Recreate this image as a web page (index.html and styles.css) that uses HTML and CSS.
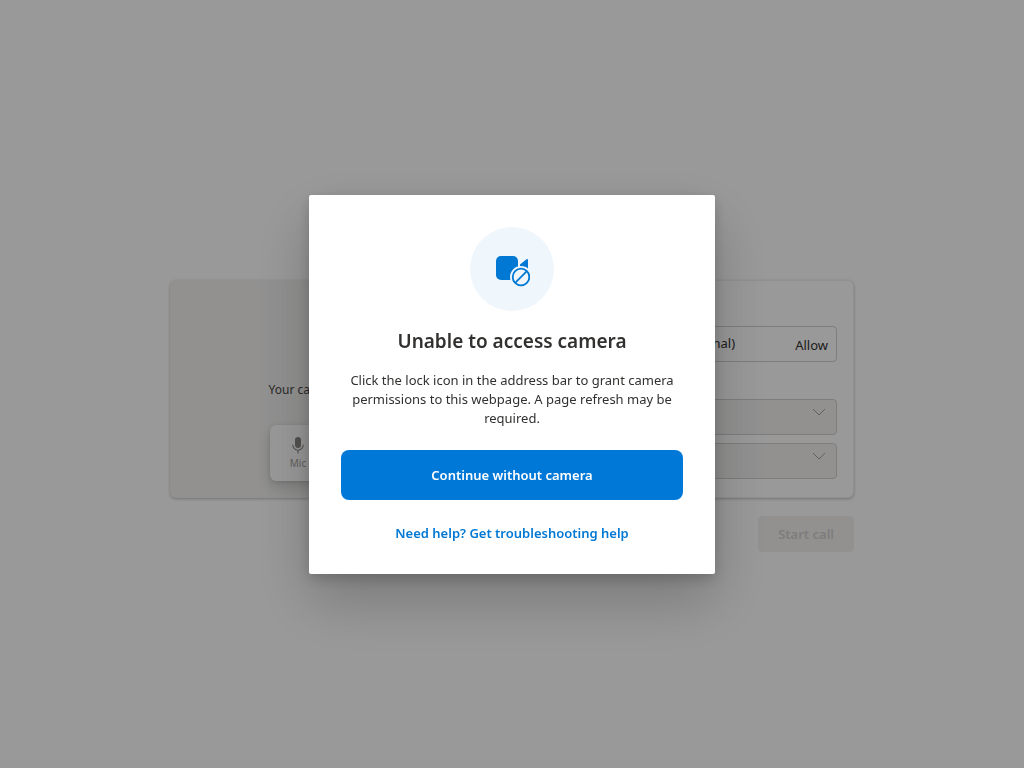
FILE: index.html
```
<!DOCTYPE html>
<html lang="en">
<head>
<meta charset="utf-8">
<meta name="viewport" content="width=device-width, initial-scale=1">
<title>Unable to access camera</title>
<link rel="stylesheet" href="styles.css">
</head>
<body>
<main class="page">
  <div class="setup">
    <section class="card">
      <div class="preview">
        <p class="preview-text">Your camera is turned off</p>
        <div class="controls">
          <button class="control" type="button" disabled>
            <svg class="control-icon" viewBox="0 0 16 20" aria-hidden="true"><rect x="5" y="2" width="6" height="11" rx="3" fill="currentColor"/><path d="M2.800 10a5.200 5.200 0 0 0 10.400 0M8 15.500v2.500" fill="none" stroke="currentColor" stroke-width="1.100" stroke-linecap="round"/></svg>
            Mic
          </button>
        </div>
      </div>
      <div class="options">
        <div class="permission"><span class="permission-name">Camera (optional)</span><button class="allow" type="button">Allow</button></div>
        <div class="field">
          <select class="select" aria-label="Microphone" disabled><option></option></select>
          <svg class="chevron" viewBox="0 0 14 14" aria-hidden="true"><path d="M1 4l6 6 6-6" fill="none" stroke="currentColor"/></svg>
        </div>
        <div class="field">
          <select class="select" aria-label="Speaker" disabled><option></option></select>
          <svg class="chevron" viewBox="0 0 14 14" aria-hidden="true"><path d="M1 4l6 6 6-6" fill="none" stroke="currentColor"/></svg>
        </div>
      </div>
    </section>
    <button class="start" type="button" disabled>Start call</button>
  </div>
</main>
<div class="overlay">
  <div class="dialog" role="dialog" aria-modal="true" aria-labelledby="dialog-title">
    <div class="badge">
      <svg class="badge-icon" viewBox="0 -2 36 36" aria-hidden="true">
        <rect x="2" y="3" width="22" height="24" rx="5" fill="#0078d4"/>
        <path d="M26 11.500L32.500 6.300Q34 5.400 34 7V21H26Z" fill="#0078d4"/>
        <circle cx="27" cy="24" r="11" fill="#eff6fc"/>
        <circle cx="27" cy="24" r="8.300" fill="none" stroke="#0078d4" stroke-width="1.800"/>
        <path d="M21.400 29.600L32.600 18.400" stroke="#0078d4" stroke-width="1.800"/>
      </svg>
    </div>
    <h1 class="title" id="dialog-title">Unable to access camera</h1>
    <p class="message">Click the lock icon in the address bar to grant camera permissions to this webpage. A page refresh may be required.</p>
    <button class="primary" type="button">Continue without camera</button>
    <a class="help" href="#">Need help? Get troubleshooting help</a>
  </div>
</div>
</body>
</html>
```
FILE: styles.css
```
* { box-sizing: border-box; }
body {
  margin: 0;
  background: #fff;
  color: #323130;
  font-family: "Segoe UI", "Noto Sans", "Open Sans", sans-serif;
  font-size: 13px;
}
button, select { font: inherit; }
.page {
  min-height: 100vh;
  display: flex;
  align-items: center;
  justify-content: center;
  padding: 64px 16px 0;
}
.setup {
  width: 100%;
  max-width: 684px;
  display: flex;
  flex-direction: column;
  gap: 18px;
}
.card {
  display: grid;
  grid-template-columns: 1fr 1fr;
  border-radius: 6px;
  box-shadow: inset 0 0 0 1px rgba(0, 0, 0, .06), 0 1px 3px rgba(0, 0, 0, .25);
  overflow: hidden;
}
.preview {
  display: flex;
  flex-direction: column;
  align-items: center;
  justify-content: flex-end;
  gap: 26px;
  margin: 1px;
  padding: 0 2px 16px 0;
  background: #f3f2f1;
}
.preview-text { margin: 0; font-size: 12px; line-height: 18px; color: #484644; }
.controls {
  width: 140px;
  height: 56px;
  display: flex;
  background: #fff;
  border-radius: 6px;
  box-shadow: 0 6px 14px rgba(0, 0, 0, .14), 0 1px 4px rgba(0, 0, 0, .12);
}
.control {
  width: 56px;
  display: flex;
  flex-direction: column;
  align-items: center;
  justify-content: center;
  padding: 0;
  border: 0;
  background: none;
  color: #a19f9d;
  font-size: 10px;
  line-height: 16px;
}
.control-icon { width: 16px; height: 20px; color: #8a8886; }
.options { padding: 46px 17px 19px 15px; }
.permission {
  height: 36px;
  display: flex;
  align-items: center;
  justify-content: space-between;
  padding: 0 8px 0 98px;
  border: 1px solid #d2d0ce;
  border-radius: 4px;
  margin-bottom: 37px;
}
.permission-name { line-height: 18px; padding-bottom: 2px; }
.allow { padding: 2px 0 0; border: 0; background: none; color: inherit; }
.field { display: grid; margin-top: 8px; }
.select, .chevron { grid-area: 1 / 1; }
.select {
  appearance: none;
  width: 100%;
  height: 36px;
  border: 1px solid #d2d0ce;
  border-radius: 4px;
  background: #f3f2f1;
  opacity: 1;
}
.chevron {
  width: 14px;
  height: 14px;
  margin: 6px 11px 0 0;
  justify-self: end;
  color: #a19f9d;
}
.start {
  align-self: flex-end;
  height: 36px;
  padding: 0 20px;
  border: 0;
  border-radius: 4px;
  background: #f3f2f1;
  color: #d2d0ce;
  font-weight: 600;
}
.overlay {
  position: fixed;
  inset: 0;
  display: flex;
  align-items: center;
  justify-content: center;
  background: rgba(0, 0, 0, .4);
}
.dialog {
  width: 406px;
  max-width: 90%;
  display: flex;
  flex-direction: column;
  align-items: center;
  padding: 32px;
  background: #fff;
  border-radius: 2px;
  text-align: center;
  box-shadow: 0 26px 58px rgba(0, 0, 0, .22), 0 5px 14px rgba(0, 0, 0, .18);
}
.badge {
  width: 84px;
  height: 84px;
  display: flex;
  align-items: center;
  justify-content: center;
  border-radius: 50%;
  background: #eff6fc;
}
.badge-icon { width: 36px; height: 36px; }
.title { margin: 16px 0; font-size: 19px; line-height: 28px; font-weight: 600; }
.message { margin: 0 0 22px; line-height: 19px; }
.primary {
  width: 100%;
  height: 50px;
  border: 0;
  border-radius: 8px;
  background: #0078d7;
  color: #fff;
  font-weight: 600;
}
.help {
  margin-top: 24px;
  line-height: 18px;
  color: #0078d4;
  font-weight: 600;
  text-decoration: none;
}
```
